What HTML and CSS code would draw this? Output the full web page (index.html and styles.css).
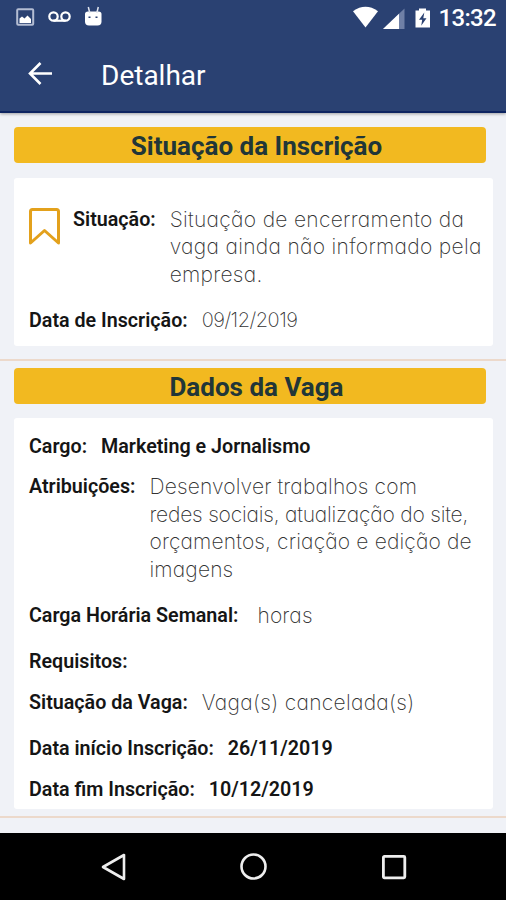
FILE: index.html
```
<!DOCTYPE html>
<html lang="pt-BR">

<head>
    <meta charset="UTF-8">
    <meta name="viewport" content="width=device-width, initial-scale=1.0">
    <title>Detalhar</title>
    <link rel="stylesheet" href="styles.css">
</head>

<body>
    <header class="header">
        <div class="status-bar">
            <svg class="status-left" width="90" height="24" viewBox="0 0 90 24">
                <rect x="1.200" y="4.200" width="16" height="15.600" rx="1" fill="none" stroke="#b4bdd3" stroke-width="2" />
                <path d="M3.500 18v-4.500l2.500-2 2.500 2 3-3 3.500 3.500V18z" fill="#fff" />
                <g fill="none" stroke="#fff" stroke-width="2.200">
                    <circle cx="37.500" cy="11.500" r="4.200" />
                    <circle cx="49.500" cy="11.500" r="4.200" />
                    <path d="M37.500 15.700h12" />
                </g>
                <path d="M69 9q0-2.500 3-2.500h10.500q3 0 3 2.500v7.500q0 4-4 4h-8.500q-4 0-4-4z" fill="#fff" />
                <path d="M73.800 8l-1.500-6M80.800 8l1.500-6" stroke="#e2e6ef" stroke-width="1.500" />
                <path d="M72.500 12.200h2M79.500 12.200h2" stroke="#2a4172" stroke-width="1.500" />
            </svg>
            <div class="status-right">
                <svg width="80" height="24" viewBox="0 0 80 24">
                    <path d="M0 6.200q12.500-8.800 25 0L12.500 22.500z" fill="#fff" />
                    <path d="M30 24L51.500 3.500V24z" fill="#6f80a6" />
                    <path d="M30 24L46 8.700V24z" fill="#fff" />
                    <path d="M62.500 5.500h3.500v-2h7v2H77V22.500H62.500z" fill="#fff" />
                    <path d="M71.300 7.500l-5.300 7.300h3.200l-1 6 5.300-7.500h-3.200z" fill="#2a4172" />
                </svg>
                <span class="clock">13:32</span>
            </div>
        </div>
        <div class="toolbar">
            <svg width="26" height="26" viewBox="0 0 26 26" fill="none" stroke="#fff" stroke-width="2.600">
                <path d="M25 12.500H3M13.500 2L3 12.500 13.500 23" />
            </svg>
            <h1 class="toolbar-title">Detalhar</h1>
        </div>
    </header>

    <main class="content">
        <section class="section">
            <h2 class="section-title">Situação da Inscrição</h2>
            <div class="card card-status">
                <div class="row">
                    <svg class="bookmark" width="31" height="37" viewBox="0 0 31 37" fill="none" stroke="#e3a11c" stroke-width="3" stroke-linejoin="round">
                        <path d="M1.500 3.500q0-2 2-2h24q2 0 2 2V35L15.500 22.500 1.500 35z" />
                    </svg>
                    <span class="label">Situação:</span>
                    <span class="value wide">Situação de encerramento da<br>vaga ainda não informado pela<br>empresa.</span>
                </div>
                <div class="row">
                    <span class="label">Data de Inscrição:</span>
                    <span class="value value-date">09/12/2019</span>
                </div>
            </div>
        </section>

        <section class="section">
            <h2 class="section-title">Dados da Vaga</h2>
            <div class="card card-job">
                <div class="row">
                    <span class="label">Cargo:</span>
                    <span class="label">Marketing e Jornalismo</span>
                </div>
                <div class="row spaced">
                    <span class="label">Atribuições:</span>
                    <span class="value">Desenvolver trabalhos com<br><span class="tight">redes sociais, atualização do site,</span><br>orçamentos, criação e edição de<br>imagens</span>
                </div>
                <div class="row spaced">
                    <span class="label">Carga Horária Semanal:</span>
                    <span class="value hours">horas</span>
                </div>
                <div class="row">
                    <span class="label">Requisitos:</span>
                </div>
                <div class="row spaced">
                    <span class="label">Situação da Vaga:</span>
                    <span class="value wide">Vaga(s) cancelada(s)</span>
                </div>
                <div class="row">
                    <span class="label">Data início Inscrição:</span>
                    <span class="label">26/11/2019</span>
                </div>
                <div class="row">
                    <span class="label">Data fim Inscrição:</span>
                    <span class="label">10/12/2019</span>
                </div>
            </div>
        </section>
    </main>

    <nav class="nav-bar">
        <svg width="26" height="28" viewBox="0 0 26 28" fill="none" stroke="#eee" stroke-width="2.600" stroke-linejoin="round">
            <path d="M24 2v24L3 14z" />
        </svg>
        <svg width="28" height="28" viewBox="0 0 28 28" fill="none" stroke="#eee" stroke-width="2.600">
            <circle cx="13.500" cy="13.500" r="12" />
        </svg>
        <svg width="26" height="26" viewBox="0 0 26 26" fill="none" stroke="#eee" stroke-width="2.800">
            <rect x="2.400" y="2.400" width="21.400" height="21.400" rx="1" />
        </svg>
    </nav>
</body>

</html>
```
FILE: styles.css
```
* {
    box-sizing: border-box;
}

body {
    margin: 0;
    height: 900px;
    display: flex;
    flex-direction: column;
    overflow: hidden;
    background-color: #f0f2f7;
    font-family: Roboto, "Liberation Sans", sans-serif;
    color: #151515;
}

svg {
    display: block;
    flex-shrink: 0;
}

.header {
    height: 113px;
    flex-shrink: 0;
    background-color: #2a4172;
    border-bottom: 2px solid #0d2461;
    box-shadow: 0 1px 3px rgba(0, 0, 0, 0.35);
    color: #fff;
}

.status-bar {
    height: 36px;
    display: flex;
    justify-content: space-between;
    padding: 5px 10px 0 16px;
}

.status-right {
    display: flex;
    gap: 6px;
}

.clock {
    font-size: 24px;
    font-weight: 500;
    line-height: 27px;
    letter-spacing: -0.7px;
}

.toolbar {
    height: 75px;
    display: flex;
    align-items: center;
    gap: 48px;
    padding-left: 27px;
}

.toolbar-title {
    margin: 3px 0 0;
    font-size: 28px;
    font-weight: 400;
}

.content {
    flex: 1;
    padding-top: 14px;
}

.section {
    border-bottom: 2px solid #ecd9cb;
    padding: 0 13px 13px 14px;
    margin-bottom: 7px;
}

.section:last-child {
    padding-bottom: 7px;
}

.section-title {
    margin: 0 7px 15px 0;
    padding-left: 13px;
    height: 36px;
    line-height: 38px;
    border-radius: 4px;
    background-color: #f2b920;
    color: #213638;
    font-size: 26px;
    font-weight: 700;
    text-align: center;
}

.card {
    display: flex;
    flex-direction: column;
    gap: 13px;
    padding-left: 15px;
    border-radius: 3px;
    background-color: #fff;
}

.card-status {
    height: 168px;
    padding-top: 28px;
    gap: 19px;
}

.card-job {
    height: 391px;
    margin-top: -1px;
    padding-top: 15px;
}

.row {
    display: flex;
    gap: 14px;
    line-height: 27.4px;
    font-size: 19.7px;
    white-space: nowrap;
}

.spaced {
    margin-bottom: 6px;
}

.label {
    font-weight: 600;
}

.value {
    font-family: Inter, "Open Sans", sans-serif;
    font-feature-settings: "cv11";
    font-size: 21px;
    font-weight: 250;
    letter-spacing: 0.15px;
    color: #333;
}

.wide {
    letter-spacing: 0.3px;
}

.tight {
    letter-spacing: -0.2px;
}

.value-date {
    font-size: 20px;
    letter-spacing: -0.5px;
}

.hours {
    margin-left: 5px;
}

.bookmark {
    margin-top: 2px;
    margin-right: -1px;
}

.nav-bar {
    height: 67px;
    flex-shrink: 0;
    display: flex;
    align-items: center;
    justify-content: space-between;
    padding: 0 99px 0 100px;
    background-color: #000;
}
```
